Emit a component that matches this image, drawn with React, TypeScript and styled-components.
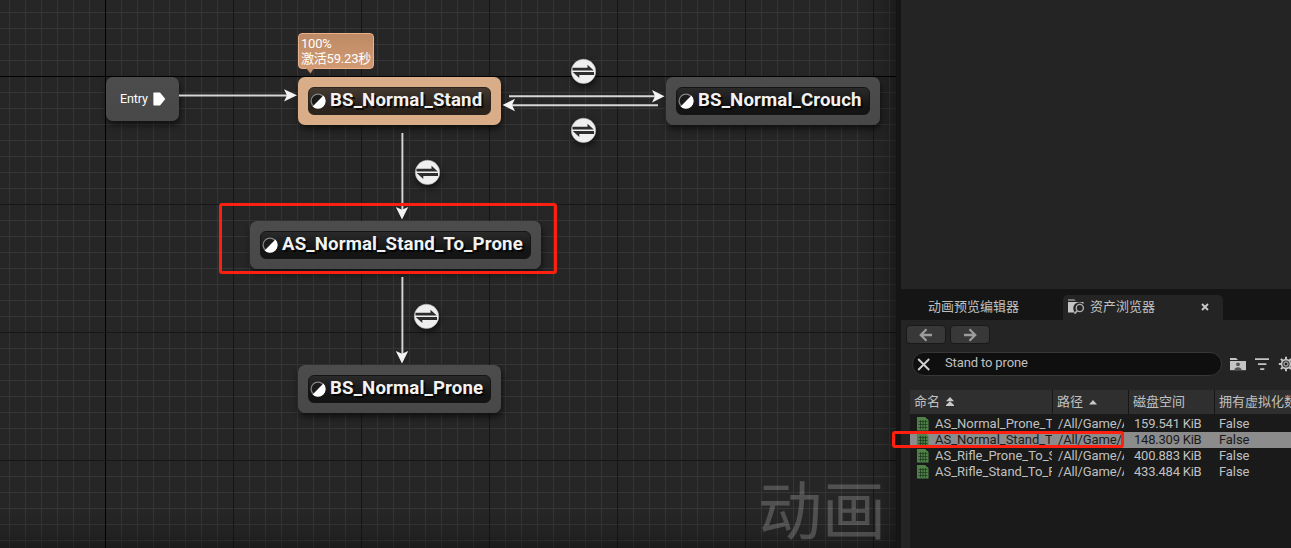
import React from 'react';
import styled, { createGlobalStyle, css } from 'styled-components';

const GlobalStyle = createGlobalStyle`
  * { box-sizing: border-box; }
  body { margin: 0; background: #151515; overflow: hidden; }
`;

const Screen = styled.div`
  position: relative;
  display: flex;
  width: 1291px;
  height: 548px;
  overflow: hidden;
  background: #151515;
  font-family: Roboto, 'Noto Sans CJK SC', sans-serif;
  font-size: 13px;
  color: #c0c0c0;
  white-space: nowrap;
`;

/* ---------- graph ---------- */

const Graph = styled.div`
  position: relative;
  flex: none;
  width: 896px;
  height: 548px;
  overflow: hidden;
  background: #262626;
`;

const Backdrop = styled.svg`
  position: absolute;
  inset: 0;
`;

const Vignette = styled.div`
  position: absolute;
  inset: 0;
  background:
    linear-gradient(to left, rgba(0, 0, 0, 0.3), rgba(0, 0, 0, 0.1) 14px, transparent 40px),
    linear-gradient(to top, rgba(0, 0, 0, 0.3), rgba(0, 0, 0, 0.1) 14px, transparent 40px);
`;

const Watermark = styled.div`
  position: absolute;
  left: 758px;
  top: 467px;
  font-size: 64px;
  line-height: 92px;
  color: rgba(255, 255, 255, 0.2);
`;

const NodeBox = styled.div<{ $x: number; $y: number; $w: number; $h?: number; $active?: boolean }>`
  position: absolute;
  left: ${(p) => p.$x}px;
  top: ${(p) => p.$y}px;
  width: ${(p) => p.$w}px;
  height: ${(p) => p.$h ?? 48}px;
  display: flex;
  padding: 10px;
  border-radius: 7px;
  background: ${(p) => (p.$active ? '#d9ad88' : 'linear-gradient(#4c4c4c, #484848)')};
  box-shadow: 1px 4px 7px rgba(0, 0, 0, 0.6);
`;

const EntryBox = styled(NodeBox)`
  align-items: center;
  gap: 5px;
  padding: 0 0 0 14px;
  color: #fff;
`;

const EntryText = styled.span`
  position: relative;
  top: -1px;
  font-size: 12.5px;
  letter-spacing: -0.1px;
  width: 28px;
`;

const Title = styled.div<{ $active?: boolean }>`
  flex: 1;
  display: flex;
  align-items: center;
  gap: 4px;
  height: 28px;
  padding-left: 1px;
  border-radius: 6px;
  border: 1px solid ${(p) => (p.$active ? '#2b231c' : '#141414')};
  background: ${(p) =>
    p.$active ? 'linear-gradient(#443a31, #2b231c 70%)' : 'linear-gradient(#2a2a2a, #131413 70%)'};
`;

const TitleText = styled.span`
  position: relative;
  top: -1px;
  font-size: 18.67px;
  letter-spacing: 0.13px;
  line-height: 22px;
  font-weight: 700;
  color: #f2f2f2;
  text-shadow: 2px 2px 0 rgba(0, 0, 0, 0.75);
`;

const Bubble = styled.div`
  position: absolute;
  left: 298px;
  top: 33px;
  width: 76px;
  height: 36px;
  padding: 2px 0 0 2px;
  border: 1px solid #eab087;
  border-radius: 4px;
  background: linear-gradient(#bd8a65, #d19a73);
  color: #fff;
  font-size: 13px;
  letter-spacing: -0.2px;
  line-height: 15px;
`;

const BubbleTail = styled.svg`
  position: absolute;
  left: 6px;
  top: 34px;
`;

const RuleBadge = styled.svg<{ $x: number; $y: number }>`
  position: absolute;
  left: ${(p) => p.$x}px;
  top: ${(p) => p.$y}px;
  overflow: visible;
  filter: drop-shadow(1px 3px 3px rgba(0, 0, 0, 0.6));
`;

const Marker = styled.div<{ $x: number; $y: number; $w: number; $h: number }>`
  position: absolute;
  left: ${(p) => p.$x}px;
  top: ${(p) => p.$y}px;
  width: ${(p) => p.$w}px;
  height: ${(p) => p.$h}px;
  border: 3px solid #fc2010;
  border-radius: 3px;
`;

const PoseIcon = () => (
  <svg width="16" height="16" viewBox="0 0 16 16" style={{ flex: 'none' }}>
    <circle cx="8" cy="8" r="6.9" fill="#1b1b1a" stroke="#858585" strokeWidth="1.3" />
    <path d="M13.4 2.6A7.6 7.6 0 1 1 2.6 13.4Z" fill="#fff" />
  </svg>
);

interface StateProps {
  x: number;
  y: number;
  w: number;
  name: string;
  active?: boolean;
}

const StateNode = ({ x, y, w, name, active }: StateProps) => (
  <NodeBox $x={x} $y={y} $w={w} $active={active}>
    <Title $active={active}>
      <PoseIcon />
      <TitleText>{name}</TitleText>
    </Title>
  </NodeBox>
);

const Rule = ({ x, y }: { x: number; y: number }) => (
  <RuleBadge $x={x} $y={y} width="26" height="26" viewBox="0 0 26 26">
    <g transform="translate(.5 .4)">
      <circle cx="13" cy="13" r="12.2" fill="#efefef" stroke="#b5b5b5" strokeWidth="0.6" />
      <path d="M2 9.4H17V6.3L23.3 12.2H2Z" fill="#2d2d2d" />
      <path d="M23.5 13.6H2.2L8.8 19.7V16.5H23.5Z" fill="#2d2d2d" />
    </g>
  </RuleBadge>
);

const range = (from: number, to: number, step: number) => {
  const out: number[] = [];
  for (let v = from; v < to; v += step) out.push(v);
  return out;
};

const Grid = () => (
  <Backdrop width="896" height="548" shapeRendering="crispEdges">
    {range(9, 896, 16).map((x) => (
      <rect key={x} x={x} y="0" width="1" height="548" fill="#353535" />
    ))}
    {range(12, 548, 16).map((y) => (
      <rect key={y} x="0" y={y} width="896" height="1" fill="#353535" />
    ))}
    {range(105, 896, 128).map((x) => (
      <rect key={x} x={x} y="0" width="1" height="548" fill={x === 105 ? '#000' : '#161616'} />
    ))}
    {range(76, 548, 128).map((y) => (
      <rect key={y} x="0" y={y} width="896" height="1" fill={y === 76 ? '#000' : '#161616'} />
    ))}
  </Backdrop>
);

const Wires = () => (
  <Backdrop width="896" height="548">
    <g stroke="#d6d6d6" strokeWidth="1.9">
      <path d="M179 95.5H288M509 96.3H656M658 105.2H512M402.4 133V210M402.4 277V354" />
    </g>
    <g fill="#f4f4f4">
      <path d="M297 95.2L284 89.2L287 95.2L284 101.5Z" />
      <path d="M664.5 96.2L652 90L655 96.2L652 102.4Z" />
      <path d="M502.5 105L515 98.8L512 105L515 111.2Z" />
      <path d="M402 219.5L395.8 207L402 209.8L408.2 207Z" />
      <path d="M402 363.5L395.8 351L402 353.8L408.2 351Z" />
    </g>
  </Backdrop>
);

/* ---------- side panel ---------- */

const Side = styled.div`
  flex: none;
  width: 390px;
  margin-left: 5px;
  display: flex;
  flex-direction: column;
`;

const Viewport = styled.div`
  height: 289px;
  background: #242424;
`;

const TabBar = styled.div`
  display: flex;
  align-items: flex-end;
  height: 31px;
`;

const Tab = styled.div<{ $on?: boolean; $w: number }>`
  display: flex;
  align-items: center;
  width: ${(p) => p.$w}px;
  height: 25px;
  padding: 0 0 2px ${(p) => (p.$on ? 5 : 27)}px;
  border-radius: 5px 5px 0 0;
  background: ${(p) => (p.$on ? '#242424' : 'transparent')};
  gap: 5px;
  line-height: 23px;
`;

const CloseX = styled.svg`
  margin-left: 41px;
`;

const Browser = styled.div`
  flex: 1;
  background: #242424;
`;

const NavRow = styled.div`
  display: flex;
  gap: 4px;
  padding: 5px 0 0 5px;
`;

const NavButton = styled.div`
  display: flex;
  align-items: center;
  justify-content: center;
  width: 40px;
  height: 19px;
  border-radius: 4px;
  border: 1px solid #191919;
  background: #383838;
`;

const SearchRow = styled.div`
  display: flex;
  align-items: center;
  margin: 8px 0 0 11px;
  height: 24px;
`;

const SearchBox = styled.div`
  display: flex;
  align-items: center;
  flex: none;
  width: 310px;
  height: 24px;
  padding-left: 4px;
  gap: 15px;
  border: 1px solid #363636;
  border-radius: 12px;
  background: #0f0f0f;
`;

const SearchText = styled.span`
  position: relative;
  top: -2px;
  letter-spacing: -0.13px;
`;

const SearchIcons = styled.svg`
  flex: none;
  margin-left: 7px;
`;

const Table = styled.div`
  margin: 14px 0 0 9px;
  height: 158px;
  background: #1a1a1a;
`;

const rowGrid = css`
  display: grid;
  grid-template-columns: 143px 76px 86px 76px;
`;

const Head = styled.div`
  ${rowGrid}
  height: 24px;
  margin-bottom: 2px;
  background: #2f2f2f;
`;

const HeadCell = styled.div`
  display: flex;
  align-items: center;
  gap: 6px;
  padding-left: 4px;
  overflow: hidden;
  border-right: 1px solid #161616;
  &:last-child { border-right: 0; }
`;

const HeadText = styled.span`
  height: 24px;
  line-height: 23px;
`;

const Row = styled.div<{ $on?: boolean }>`
  ${rowGrid}
  height: 16px;
  line-height: 16px;
  background: ${(p) => (p.$on ? '#8c8c8c' : 'transparent')};
  color: ${(p) => (p.$on ? '#1a1a1a' : '#c0c0c0')};
`;

const Cell = styled.div<{ $file?: boolean }>`
  display: flex;
  align-items: center;
  gap: 6px;
  height: 16px;
  margin-right: ${(p) => (p.$file ? 1 : 5)}px;
  padding-left: ${(p) => (p.$file ? 7 : 5)}px;
  overflow: hidden;
  &:last-child { padding-left: 4px; }
`;

const Label = styled.span<{ $spacing: number }>`
  letter-spacing: ${(p) => p.$spacing}px;
`;

const SheetIcon = () => (
  <svg width="12" height="16" viewBox="0 0 12 16" style={{ flex: 'none' }}>
    <path d="M0 1H8L11.5 4V14.5H0Z" fill="#4f8249" />
    <path
      d="M1.5 5.5H10.5M1.5 8.5H10.5M1.5 11.5H10.5M3.5 4V13.5M6 4V13.5M8.5 4V13.5"
      stroke="#223c20"
      strokeWidth="0.8"
    />
  </svg>
);

const rows = [
  ['AS_Normal_Prone_T', '159.541 KiB'],
  ['AS_Normal_Stand_To', '148.309 KiB'],
  ['AS_Rifle_Prone_To_S', '400.883 KiB'],
  ['AS_Rifle_Stand_To_P', '433.484 KiB'],
];

const gearTeeth = range(0, 360, 45);

export default function App() {
  return (
    <>
      <GlobalStyle />
      <Screen>
        <Graph>
          <Grid />
          <Vignette />
          <Watermark>动画</Watermark>
          <EntryBox $x={106} $y={77} $w={73} $h={44}>
            <EntryText>Entry</EntryText>
            <svg width="13" height="14" viewBox="0 0 13 14">
              <path d="M1 .5H7L12.3 7L7 13.5H1Q.4 13.5 .4 12.7V1.3Q.4 .5 1 .5Z" fill="#fff" />
            </svg>
          </EntryBox>
          <StateNode x={298} y={77} w={203} name="BS_Normal_Stand" active />
          <StateNode x={666} y={77} w={214} name="BS_Normal_Crouch" />
          <StateNode x={250} y={221} w={291} name="AS_Normal_Stand_To_Prone" />
          <StateNode x={298} y={365} w={203} name="BS_Normal_Prone" />
          <Bubble>
            100%
            <br />
            激活59.23秒
            <BubbleTail width="10" height="6" viewBox="0 0 10 6">
              <path d="M1 0H9L5.5 5.5Z" fill="#c8936d" />
            </BubbleTail>
          </Bubble>
          <Wires />
          <Rule x={570} y={58} />
          <Rule x={570} y={117} />
          <Rule x={414} y={159} />
          <Rule x={413} y={303} />
          <Marker $x={219} $y={203} $w={338} $h={71} />
        </Graph>

        <Side>
          <Viewport />
          <TabBar>
            <Tab $w={162}>动画预览编辑器</Tab>
            <Tab $on $w={160}>
              <svg width="17" height="17" viewBox="0 0 17 17">
                <path d="M0 1H6L8 3H0Z" fill="#777" />
                <path d="M0 4H15.5V6A5.6 5.6 0 0 0 7 14.5H0Z" fill="#c4c4c4" />
                <circle cx="11.8" cy="10" r="3.6" fill="none" stroke="#b0b0b0" strokeWidth="1.4" />
                <path d="M9.2 12.8L6.5 15.6" stroke="#b0b0b0" strokeWidth="1.7" />
              </svg>
              资产浏览器
              <CloseX width="8" height="8" viewBox="0 0 8 8">
                <path d="M1 1L7 7M7 1L1 7" stroke="#c8c8c8" strokeWidth="1.9" />
              </CloseX>
            </Tab>
          </TabBar>
          <Browser>
            <NavRow>
              <NavButton>
                <svg width="14" height="14" viewBox="0 0 14 14" fill="none" stroke="#9c9c9c" strokeWidth="2.3">
                  <path d="M13 7H2M7.5 1.3L1.8 7L7.5 12.7" />
                </svg>
              </NavButton>
              <NavButton>
                <svg width="14" height="14" viewBox="0 0 14 14" fill="none" stroke="#9c9c9c" strokeWidth="2.3">
                  <path d="M1 7H12M6.5 1.3L12.2 7L6.5 12.7" />
                </svg>
              </NavButton>
            </NavRow>
            <SearchRow>
              <SearchBox>
                <svg width="13" height="13" viewBox="0 0 13 13">
                  <path d="M1.2 1L12.2 12M12.2 1L1.2 12" stroke="#d0d0d0" strokeWidth="1.9" />
                </svg>
                <SearchText>Stand to prone</SearchText>
              </SearchBox>
              <SearchIcons width="66" height="18" viewBox="0 0 66 18" fill="#c4c4c4">
                <path d="M1 3H7L9 5H1Z" />
                <path d="M1 6H17V15.2H1Z" />
                <circle cx="9" cy="9.3" r="1.9" fill="#555" />
                <path d="M5.3 15.2C5.5 11.3 12.5 11.3 12.7 15.2Z" fill="#555" />
                <path d="M26 3.2H40V5H26ZM29 8.2H37.4V10H29ZM31.2 13.2H35.3V15H31.2Z" />
                <g transform="translate(57 9)" stroke="#c4c4c4" fill="none">
                  <circle r="4.4" strokeWidth="1.6" />
                  <circle r="2" strokeWidth="1.4" stroke="#999" />
                  {gearTeeth.map((a) => (
                    <path key={a} d="M0 -4.6V-7.2" strokeWidth="2" transform={`rotate(${a})`} />
                  ))}
                </g>
              </SearchIcons>
            </SearchRow>
            <Table>
              <Head>
                <HeadCell>
                  <HeadText>命名</HeadText>
                  <svg width="8" height="10" viewBox="0 0 8 10" fill="#c8c8c8">
                    <path d="M4 0L8 4.3H0ZM4 4.2L8 8H0ZM0 8H8V9H0Z" />
                  </svg>
                </HeadCell>
                <HeadCell>
                  <HeadText>路径</HeadText>
                  <svg width="8" height="5" viewBox="0 0 8 5" fill="#c8c8c8">
                    <path d="M4 0L8 4.5H0Z" />
                  </svg>
                </HeadCell>
                <HeadCell>
                  <HeadText>磁盘空间</HeadText>
                </HeadCell>
                <HeadCell>
                  <HeadText>拥有虚拟化数</HeadText>
                </HeadCell>
              </Head>
              {rows.map(([name, size], i) => (
                <Row key={name} $on={i === 1}>
                  <Cell $file>
                    <SheetIcon />
                    <Label $spacing={0}>{name}</Label>
                  </Cell>
                  <Cell>
                    <Label $spacing={-0.15}>/All/Game/A</Label>
                  </Cell>
                  <Cell>
                    <Label $spacing={-0.22}>{size}</Label>
                  </Cell>
                  <Cell>
                    <Label $spacing={-0.1}>False</Label>
                  </Cell>
                </Row>
              ))}
            </Table>
          </Browser>
        </Side>
        <Marker $x={892} $y={431} $w={232} $h={17} />
      </Screen>
    </>
  );
}
